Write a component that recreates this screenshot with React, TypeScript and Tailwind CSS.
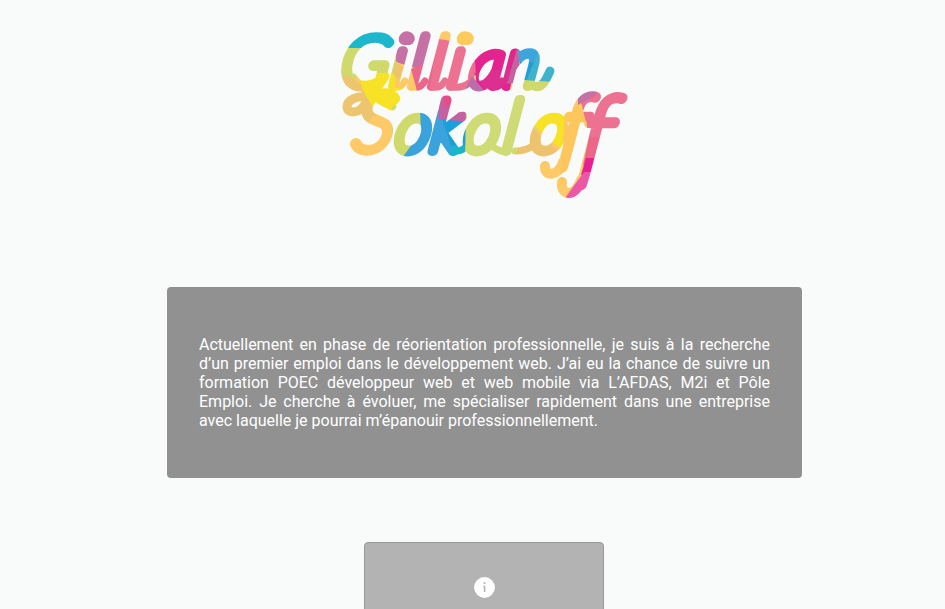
type Glyph = { ch: string; x: number; y: number; size: number };

const SKEW = 0.1405;

const firstName: Glyph[] = [
  { ch: "G", x: 4, y: 66, size: 69 },
  { ch: "i", x: 54, y: 66, size: 71 },
  { ch: "l", x: 73, y: 66, size: 69 },
  { ch: "l", x: 93, y: 66, size: 69 },
  { ch: "i", x: 112, y: 66, size: 71 },
  { ch: "a", x: 134, y: 66, size: 65 },
  { ch: "n", x: 168, y: 66, size: 66 },
];

const lastName: Glyph[] = [
  { ch: "S", x: 17, y: 130, size: 80 },
  { ch: "o", x: 59, y: 131, size: 67 },
  { ch: "k", x: 94, y: 131, size: 70 },
  { ch: "o", x: 128, y: 131, size: 67 },
  { ch: "l", x: 167, y: 131, size: 71 },
  { ch: "o", x: 195, y: 131, size: 67 },
  { ch: "f", x: 224, y: 137, size: 86 },
  { ch: "f", x: 242, y: 152, size: 106 },
];

function Word({ glyphs }: { glyphs: Glyph[] }) {
  return (
    <text
      transform="skewX(-8)"
      className="font-[family-name:Lato,sans-serif] font-thin italic"
      fill="url(#patches-slanted)"
      stroke="url(#patches-slanted)"
      strokeWidth="10"
      strokeLinejoin="round"
      strokeLinecap="round"
    >
      {glyphs.map((g, i) => (
        <tspan key={i} x={g.x + g.y * SKEW} y={g.y} fontSize={g.size}>
          {g.ch}
        </tspan>
      ))}
    </text>
  );
}

function Logo() {
  return (
    <svg className="overflow-visible" width="300" height="190" viewBox="0 0 300 190" role="img" aria-label="Gillian Sokoloff">
      <defs>
        <pattern id="patches" width="300" height="190" patternUnits="userSpaceOnUse">
          <rect width="300" height="190" fill="#fdca67" />
          <path d="M0 0H62V28H0z" fill="#1bb7cc" />
          <path d="M0 28H42L62 34V54H24L0 80z" fill="#d0d96c" />
          <path d="M0 56L14 56L28 66L42 96L0 96z" fill="#edc56f" />
          <path d="M19 43L25 53H60V92H40L28 70z" fill="#f7e225" />
          <path d="M61 0H98V44L80 48L61 42z" fill="#c671a5" />
          <path d="M61 41L68 47L64 60L58 54z" fill="#e9c66c" />
          <path d="M76 49L100 40V74H83z" fill="#ec668a" />
          <path d="M98 18L122 22L140 28L141 54L128 74H92z" fill="#ed7292" />
          <path d="M80 50L100 34L94 74H82z" fill="#ec668a" />
          <path d="M123 8H142V26H123z" fill="#fdca5c" />
          <path d="M139 26H184L174 74H142z" fill="#e5238e" />
          <path d="M137 56L152 74H128z" fill="#bb6cac" />
          <path d="M139 53L182 48L174 62L153 74z" fill="#dc2f91" />
          <path d="M183 25L186 62L172 64z" fill="#c562a0" />
          <path d="M183 28H208L195 60H187z" fill="#219dd9" />
          <path d="M184 26H210L204 42L184 42z" fill="#3ea4dc" />
          <path d="M204 30H224V64H190z" fill="#3fb3cc" />
          <path d="M186 60L222 62V75H180z" fill="#d0d96c" />
          <path d="M0 72H28L42 92L32 104H0z" fill="#edc56f" />
          <path d="M28 68H66V96H42z" fill="#f7e225" />
          <path d="M57 86H86V112L67 138H57z" fill="#d0d96c" />
          <path d="M85 90H132V138H67L86 112z" fill="#3ba3dc" />
          <path d="M107 99H132V126H116z" fill="#1b9eda" />
          <path d="M105 72H134V102L103 99z" fill="#c560a2" />
          <path d="M108 72H125L120 86L110 87z" fill="#e64c86" />
          <path d="M116 126H131V139H114z" fill="#18b5cb" />
          <path d="M131 90H202V139H130z" fill="#cfdb75" />
          <path d="M170 72H202V92H170z" fill="#cfdb75" />
          <path d="M192 74H202V84L195 90z" fill="#f7e225" />
          <path d="M197 106L212 124L180 140V134z" fill="#ebc46d" />
          <path d="M197 88H229L232 115L235 134L213 119L198 104z" fill="#f7e225" />
          <path d="M197 117L210 118L224 132L205 139L182 137z" fill="#edc46d" />
          <path d="M241 60H300V190H245L254 145V116z" fill="#ed7292" />
          <path d="M242 60H267L260 76L243 85z" fill="#c471a5" />
          <path d="M243 86L252 103L247 143L225 165L230 90z" fill="#fdc75d" />
          <path d="M254 117H270L260 145H248z" fill="#ec668a" />
          <path d="M251 138H262L256 155H246z" fill="#e81f91" />
          <path d="M249 152H264L245 190H222L235 171z" fill="#ec58a6" />
        </pattern>
        <pattern id="patches-slanted" href="#patches" patternTransform="skewX(8)" />
      </defs>
      <Word glyphs={firstName} />
      <Word glyphs={lastName} />
      {/* flourishes: the loop that ties the two words, the joins along the baselines and the closing swashes */}
      <g fill="none" stroke="url(#patches)" strokeWidth="9" strokeLinecap="round">
        <path d="M18 58C22 66 32 68 40 76C46 82 50 82 57 86M34 77C22 75 12 80 12 87C12 94 25 94 30 84C33 76 44 68 50 56" />
        <path d="M60 67Q66 68 70 61M80 67Q86 68 90 61M99 67Q106 68 110 61M118 67Q128 68 134 63M157 67Q164 68 167 61" strokeWidth="7" />
        <path d="M199 66C207 69 211 60 215 51" />
        <path d="M121 131Q129 131 133 124M173 131Q167 133 160 128M180 131Q190 131 198 126" strokeWidth="7" />
        <path d="M228 142C223 157 209 157 210 146" strokeWidth="10" />
        <path d="M246 160C240 179 225 175 227 162" strokeWidth="10" />
      </g>
      <circle cx="73" cy="18.5" r="6.8" fill="#c671a5" />
      <circle cx="132" cy="18.5" r="6.8" fill="#fdca5c" />
    </svg>
  );
}

export default function App() {
  return (
    <main className="flex h-[609px] w-full flex-col overflow-hidden bg-[#f9fbfa] pl-[167px] pt-5 font-['Roboto',sans-serif]">
      <header className="ml-[168px] h-[267px] shrink-0">
        <Logo />
      </header>
      <section className="w-[635px] shrink-0 rounded bg-[#919191] px-8 py-12">
        <p className="text-justify text-base leading-[19px] text-white">
          Actuellement en phase de réorientation professionnelle, je suis à la recherche d’un premier emploi dans le
          développement web. J’ai eu la chance de suivre un formation POEC développeur web et web mobile via L’AFDAS,
          M2i et Pôle Emploi. Je cherche à évoluer, me spécialiser rapidement dans une entreprise avec laquelle je
          pourrai m’épanouir professionnellement.
        </p>
      </section>
      <section className="ml-[197px] mt-16 flex h-60 w-60 shrink-0 justify-center rounded border border-[#999] bg-[#b3b3b3] pt-[33.5px]">
        <svg width="21" height="21" viewBox="0 0 21 21">
          <circle cx="10.5" cy="10.5" r="10.4" fill="#fff" />
          <path d="M9.6 5.3h1.8v1.8H9.6zM9.2 8.7h2.2v6.4H9.8V9.8h-.6z" fill="#b3b3b3" />
        </svg>
      </section>
    </main>
  );
}
